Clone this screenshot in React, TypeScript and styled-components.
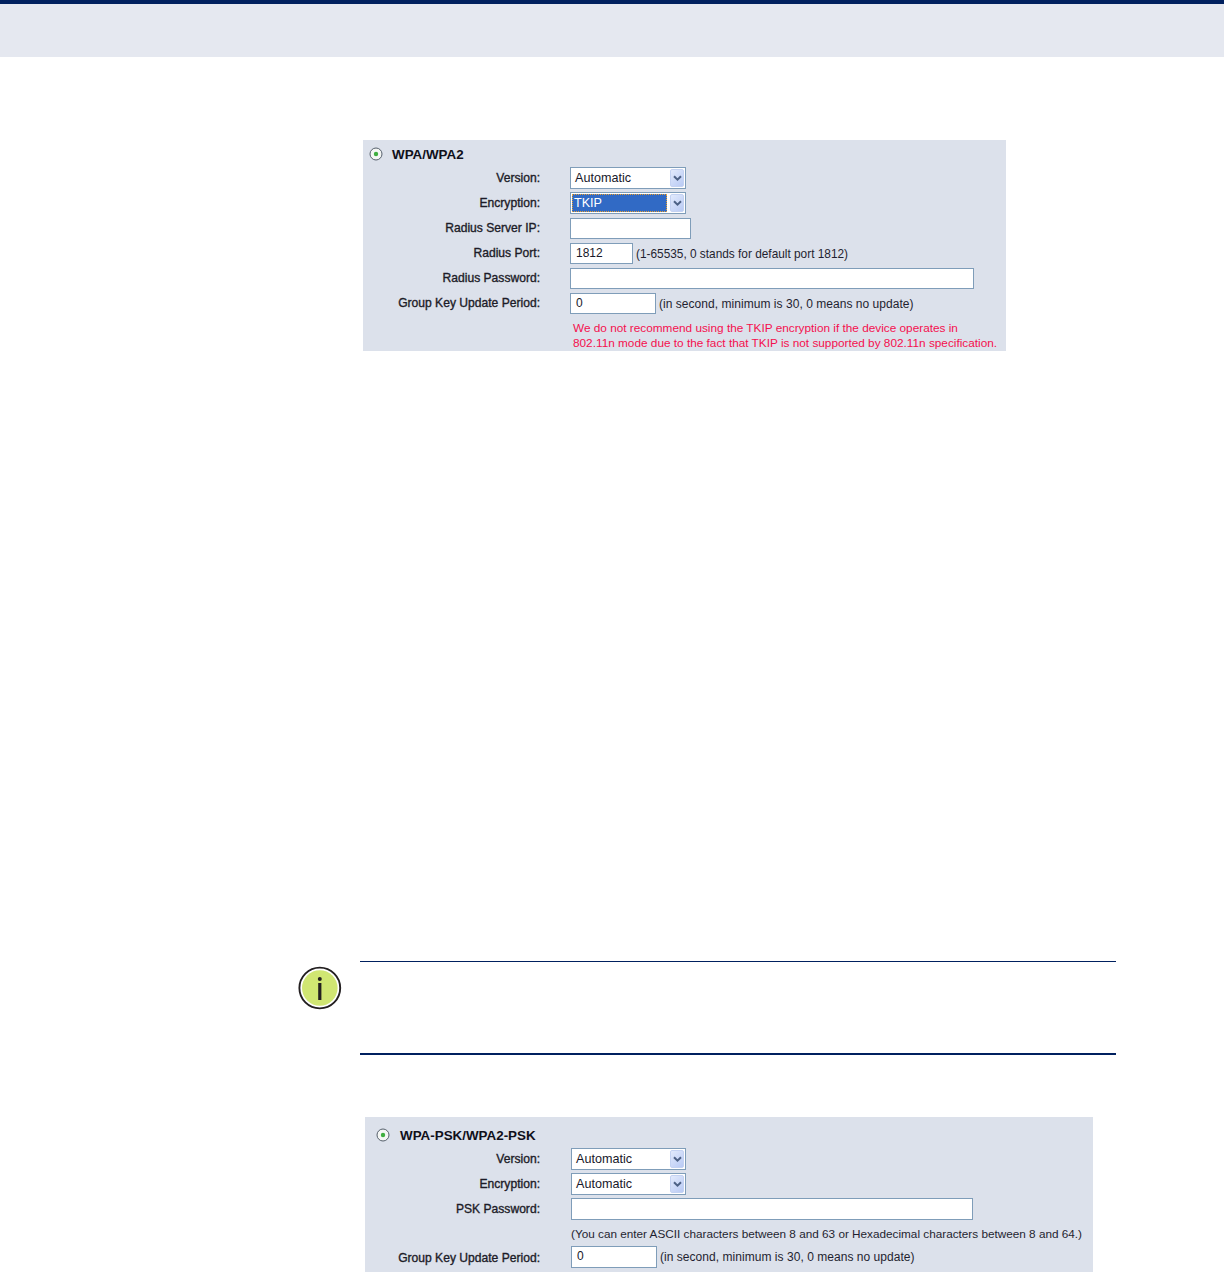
import React from "react";
import styled, { createGlobalStyle } from "styled-components";

const Global = createGlobalStyle`
  html, body { margin: 0; padding: 0; background: #fff; }
  body { font-family: "Liberation Sans", Arial, sans-serif; }
  #root { height: 1272px; overflow: hidden; }
`;

const Header = styled.header`
  height: 53px;
  border-top: 4px solid #00205f;
  background: #e5e8f0;
`;

const Panel = styled.section<{ $left: number; $top: number; $width: number; $pad?: number }>`
  box-sizing: border-box;
  margin: ${(p) => p.$top}px 0 0 ${(p) => p.$left}px;
  width: ${(p) => p.$width}px;
  padding-bottom: ${(p) => p.$pad ?? 0}px;
  background: #dce1eb;
  color: #14141e;
  font-size: 12px;
`;

const TitleRow = styled.div<{ $height: number; $indent: number; $shift: number; $gap: number }>`
  box-sizing: border-box;
  display: flex;
  align-items: center;
  height: ${(p) => p.$height}px;
  padding: ${(p) => p.$shift}px 0 0 ${(p) => p.$indent}px;
  gap: ${(p) => p.$gap}px;
  font-size: 13.4px;
  font-weight: 700;
  color: #10101a;
`;

const Row = styled.div<{ $height?: number; $label: number; $gap: number }>`
  display: grid;
  grid-template-columns: ${(p) => p.$label}px auto;
  column-gap: ${(p) => p.$gap}px;
  align-items: center;
  height: ${(p) => p.$height ?? 25}px;
`;

const Label = styled.label`
  margin-bottom: 1px;
  text-align: right;
  font-size: 12.1px;
  -webkit-text-stroke: 0.35px #1c1c28;
  white-space: nowrap;
  color: #1c1c28;
`;

const LowLabel = styled(Label)`
  margin: 2px 0 0;
`;

const Controls = styled.div`
  display: flex;
  align-items: center;
  gap: 3px;
  white-space: nowrap;
`;

const TextBox = styled.div<{ $width: number; $height?: number; $raise?: number }>`
  box-sizing: border-box;
  width: ${(p) => p.$width}px;
  height: ${(p) => p.$height ?? 21}px;
  margin-bottom: ${(p) => p.$raise ?? 0}px;
  padding: 0 5px;
  border: 1px solid #7f9db9;
  background: #fff;
  line-height: 19px;
  color: #18182a;
`;

const SelectBox = styled.div<{ $width: number }>`
  box-sizing: border-box;
  display: flex;
  align-items: stretch;
  width: ${(p) => p.$width}px;
  height: 22px;
  margin-bottom: 1px;
  padding: 1px;
  border: 1px solid #7f9db9;
  background: #fff;
`;

const SelectValue = styled.span<{ $selected?: boolean }>`
  flex: 1;
  padding-left: ${(p) => (p.$selected ? 2 : 3)}px;
  font-size: 12.6px;
  line-height: 18px;
  background: ${(p) => (p.$selected ? "#316ac5" : "transparent")};
  color: ${(p) => (p.$selected ? "#fff" : "#18182a")};
  outline: ${(p) => (p.$selected ? "1px dotted #e8a030" : "none")};
  outline-offset: -1px;
`;

const ArrowButton = styled.span`
  box-sizing: border-box;
  display: flex;
  align-items: center;
  justify-content: center;
  width: 14px;
  margin-left: 3px;
  border-radius: 2px;
  border: 1px solid #c4d2f2;
  background: linear-gradient(135deg, #e2eafc, #b9caf4);
`;

const Hint = styled.span<{ $size?: number; $track?: number }>`
  font-size: ${(p) => p.$size ?? 12}px;
  letter-spacing: ${(p) => p.$track ?? 0}px;
  color: #1f1f30;
`;

const HintRow = styled.div`
  padding-left: 206px;
  height: 24px;
  line-height: 24px;
  font-size: 11.75px;
  white-space: nowrap;
  color: #1f1f30;
`;

const Warning = styled.div`
  padding: 5px 0 0 210px;
  line-height: 15px;
  font-size: 11.8px;
  white-space: nowrap;
  color: #f4104e;
`;

const Note = styled.aside`
  display: flex;
  margin: 610px 0 0 298px;
  width: 818px;
`;

const NoteIcon = styled.svg`
  flex: none;
  width: 44px;
  height: 44px;
  margin: 5px 18px 0 0;
`;

const NoteBody = styled.div`
  flex: 1;
  box-sizing: border-box;
  height: 94px;
  border-top: 1px solid #00205f;
  border-bottom: 2px solid #00205f;
`;

const RadioIcon = styled.svg`
  flex: none;
  width: 14px;
  height: 14px;
`;

const RadioMark = () => (
  <RadioIcon viewBox="0 0 14 14">
    <circle cx="7" cy="7" r="6" fill="#f4f6f4" stroke="#56606c" strokeWidth="1" />
    <circle cx="7" cy="7" r="2.2" fill="#3fae3f" />
  </RadioIcon>
);

const Chevron = () => (
  <svg width="9" height="7" viewBox="0 0 9 7">
    <path d="M1 1.2 L4.5 4.7 L8 1.2" fill="none" stroke="#4d6185" strokeWidth="2" />
  </svg>
);

const Select = ({ width, value, selected }: { width: number; value: string; selected?: boolean }) => (
  <SelectBox $width={width}>
    <SelectValue $selected={selected}>{value}</SelectValue>
    <ArrowButton>
      <Chevron />
    </ArrowButton>
  </SelectBox>
);

export default function App() {
  return (
    <>
      <Global />
      <Header />
      <Panel $left={363} $top={83} $width={643}>
        <TitleRow $height={26} $indent={6} $shift={2} $gap={9}>
          <RadioMark />
          <span>WPA/WPA2</span>
        </TitleRow>
        <Row $label={177} $gap={30}>
          <Label>Version:</Label>
          <Select width={116} value="Automatic" />
        </Row>
        <Row $label={177} $gap={30}>
          <Label>Encryption:</Label>
          <Select width={116} value="TKIP" selected />
        </Row>
        <Row $label={177} $gap={30}>
          <Label>Radius Server IP:</Label>
          <TextBox $width={121} />
        </Row>
        <Row $label={177} $gap={30}>
          <Label>Radius Port:</Label>
          <Controls>
            <TextBox $width={63}>1812</TextBox>
            <Hint $size={11.85}>(1-65535, 0 stands for default port 1812)</Hint>
          </Controls>
        </Row>
        <Row $label={177} $gap={30}>
          <Label>Radius Password:</Label>
          <TextBox $width={404} />
        </Row>
        <Row $label={177} $gap={30}>
          <Label>Group Key Update Period:</Label>
          <Controls>
            <TextBox $width={86}>0</TextBox>
            <Hint $track={0.04}>(in second, minimum is 30, 0 means no update)</Hint>
          </Controls>
        </Row>
        <Warning>
          We do not recommend using the TKIP encryption if the device operates in
          <br />
          802.11n mode due to the fact that TKIP is not supported by 802.11n specification.
        </Warning>
      </Panel>
      <Note>
        <NoteIcon viewBox="0 0 44 44">
          <circle cx="21.8" cy="22" r="20.4" fill="#fff" stroke="#231f20" strokeWidth="1.9" />
          <circle cx="21.8" cy="22" r="17.8" fill="#d0e672" />
          <circle cx="21.8" cy="13" r="2" fill="#231f20" />
          <rect x="20.2" y="17" width="3.2" height="17" fill="#231f20" />
        </NoteIcon>
        <NoteBody />
      </Note>
      <Panel $left={365} $top={62} $width={728} $pad={4}>
        <TitleRow $height={30} $indent={11} $shift={6} $gap={10}>
          <RadioMark />
          <span>WPA-PSK/WPA2-PSK</span>
        </TitleRow>
        <Row $label={175} $gap={31}>
          <Label>Version:</Label>
          <Select width={115} value="Automatic" />
        </Row>
        <Row $label={175} $gap={31}>
          <Label>Encryption:</Label>
          <Select width={115} value="Automatic" />
        </Row>
        <Row $label={175} $gap={31}>
          <Label>PSK Password:</Label>
          <TextBox $width={402} $height={22} $raise={1} />
        </Row>
        <HintRow>(You can enter ASCII characters between 8 and 63 or Hexadecimal characters between 8 and 64.)</HintRow>
        <Row $height={22} $label={175} $gap={31}>
          <LowLabel>Group Key Update Period:</LowLabel>
          <Controls>
            <TextBox $width={86} $height={22}>0</TextBox>
            <Hint $track={0.04}>(in second, minimum is 30, 0 means no update)</Hint>
          </Controls>
        </Row>
      </Panel>
    </>
  );
}
